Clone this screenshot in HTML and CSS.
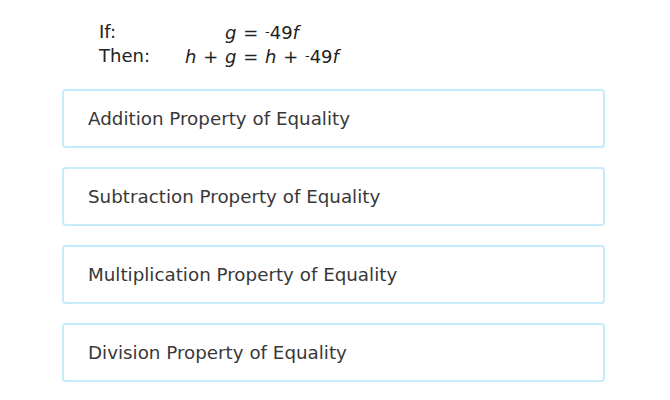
FILE: index.html
```html
<!DOCTYPE html>
<html>
<head>
    <title>Properties of Equality</title>
    <link rel="stylesheet" href="styles.css">
</head>
<body>
    <div class="pregunta">
        <!-- Enunciado -->
        <div class="enunciado">
            <span class="etiqueta">If:</span>
            <span class="expr"><i>g</i> = <span class="neg">-</span>49<i>f</i></span>
            <span class="etiqueta">Then:</span>
            <span class="expr"><i>h</i> + <i>g</i> = <i>h</i> + <span class="neg">-</span>49<i>f</i></span>
        </div>

        <!-- Opciones -->
        <div class="opciones">
            <div class="opcion">Addition Property of Equality</div>
            <div class="opcion">Subtraction Property of Equality</div>
            <div class="opcion">Multiplication Property of Equality</div>
            <div class="opcion">Division Property of Equality</div>
        </div>
    </div>
</body>
</html>
```

FILE: styles.css
```css
body {
    margin: 0;
    background-color: white;
    font-family: "DejaVu Sans", Verdana, sans-serif;
    color: #222;
}

.pregunta {
    padding: 20px 0 0 62px;
    width: 543px;
}

.enunciado {
    display: grid;
    grid-template-columns: 80px 166px;
    line-height: 23px;
    font-size: 18px;
    padding-left: 37px;
    margin-bottom: 21px;
}

.expr {
    text-align: center;
    word-spacing: 1px;
}

.neg {
    font-size: 13px;
    vertical-align: 3px;
}

.opciones {
    display: flex;
    flex-direction: column;
    gap: 19px;
}

.opcion {
    height: 55px;
    border: 2px solid #c6ecfb;
    border-radius: 4px;
    padding-left: 24px;
    display: flex;
    align-items: center;
    font-size: 18.3px;
    color: #383838;
    box-shadow: 0 0 1px #dff5fd;
}
```
